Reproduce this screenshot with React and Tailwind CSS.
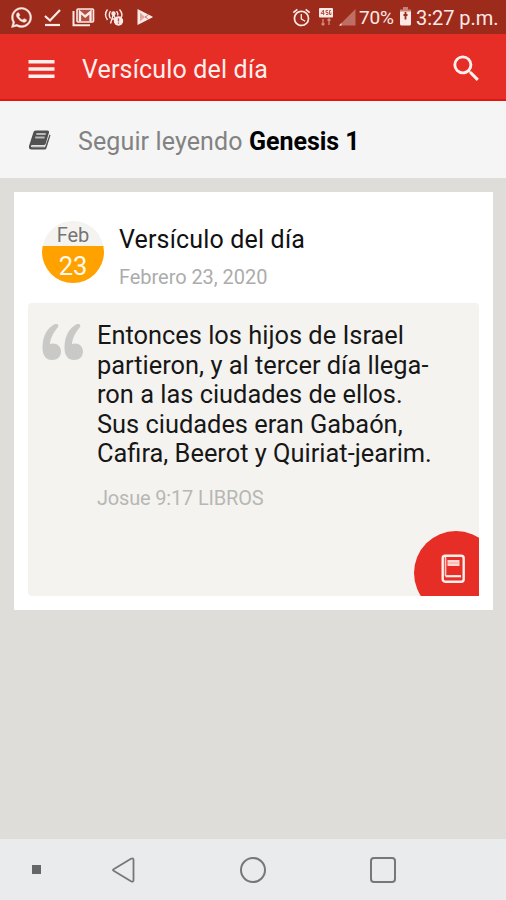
import React from "react";
import { FaWhatsapp } from "react-icons/fa";
import { MdAlarm, MdSearch } from "react-icons/md";

function StatusBar() {
  return (
    <div className="flex h-[34px] shrink-0 items-center bg-[#9d2b1b] text-[#fde9e6]">
      <FaWhatsapp className="ml-[10px] size-[23px] shrink-0" stroke="currentColor" strokeWidth="10" />
      <svg className="ml-[10px] h-[20px] w-[19px] shrink-0" viewBox="0 0 19 20" fill="none" stroke="currentColor">
        <path d="M2 9l5 4.500L17 3" strokeWidth="2.200" />
        <path d="M2 18h15" strokeWidth="2.200" />
      </svg>
      <svg className="ml-[10px] h-[20px] w-[23px] shrink-0" viewBox="0 0 23 20" fill="none" stroke="currentColor">
        <path d="M1.500 4v14.200H18" strokeWidth="2" />
        <rect x="5" y="2" width="16.500" height="13" rx="1" strokeWidth="1.600" fill="currentColor" fillOpacity=".2" />
        <path d="M8 14.500V5l5.200 4.500L18.500 5v9.500" strokeWidth="2.300" />
      </svg>
      <svg className="ml-[9px] h-[20px] w-[21px] shrink-0" viewBox="0 0 21 20" fill="none" stroke="currentColor" strokeWidth="1.400">
        <path d="M3.500 2.500Q-.5 7.500 3.500 13M6.500 4.200Q4 7.500 6.500 11.500M15.500 2.500Q19.500 7 17 10.500M12.500 4.200Q14.500 6.500 13.500 8.500" />
        <circle cx="9.500" cy="6.500" r="1.500" fill="currentColor" />
        <path d="M9.500 7L6.500 16.500M9.500 7l2 5M8 12h3" />
        <circle cx="14.500" cy="14" r="4.700" fill="currentColor" stroke="none" />
        <path d="M14.500 11.200v3.200M14.500 15.500v1.300" stroke="#b8584b" />
      </svg>
      <svg className="ml-[11px] h-[20px] w-[18px] shrink-0" viewBox="0 0 18 20">
        <path d="M1.500 2l14.800 7.600q1 .5 0 1L1.500 18z" fill="currentColor" />
        <path d="M9 9.500l4.500 4M9 10.500l4.500-4" stroke="#b8584b" strokeWidth=".8" />
        <path d="M4 5.500l5 4.500-5 4.500z" fill="#e3a59c" />
      </svg>
      <MdAlarm className="ml-auto size-[21px] shrink-0" />
      <svg className="ml-[6px] h-[20px] w-[16px] shrink-0" viewBox="0 0 16 20">
        <rect x="1" y="1" width="14" height="9.500" rx="1" fill="currentColor" />
        <path d="M5.500 3L3 6.500h3.500M5.500 3v5M8 7.500h2V5.500H8V3.500h2M13 3.500h-1.500v4H13v-2" fill="none" stroke="#b8584b" strokeWidth="1" />
        <path d="M5 12v6M3.500 16.500L5 18l1.500-1.500M11 18v-5.500M9.500 13.500L11 12l1.500 1.500" fill="none" stroke="#d68d81" strokeWidth="1.300" />
      </svg>
      <svg className="ml-[4px] h-[20px] w-[18px] shrink-0" viewBox="0 0 18 20">
        <path d="M17.500 2v16.500H1z" fill="#bf6e63" />
        <path d="M3.500 16v2.500H1z" fill="currentColor" />
      </svg>
      <span className="ml-[3px] mt-[2px] w-[37px] whitespace-nowrap text-[19px] tracking-[-0.200px]">70%</span>
      <svg className="ml-[3px] h-[20px] w-[13px] shrink-0" viewBox="0 0 13 20">
        <path d="M4 0h5v2.500h3V7H1V2.500h3z" fill="#c98177" />
        <path d="M1 4.500h11v12.500q0 1.500-1.500 1.500h-8Q1 18.500 1 17z" fill="currentColor" />
        <path d="M6.500 5v7.500M4.500 8h4" stroke="#9d2b1b" strokeWidth="1.800" />
      </svg>
      <span className="ml-[4px] mt-[2px] w-[90px] whitespace-nowrap text-[20px] tracking-[-0.050px]">3:27 p.m.</span>
    </div>
  );
}

function AppBar() {
  return (
    <header className="flex h-[67px] shrink-0 items-center border-b-2 border-[#df1710] bg-[#e62e26] pt-[2px] text-[#fff0ed]">
      <svg className="mt-[2px] ml-[28px] h-[20px] w-[27px] shrink-0" viewBox="0 0 27 20" fill="currentColor">
        <path d="M.5 1h26v3.500H.5zM.5 8.200h26v3.500H.5zM.5 15.400h26v3.500H.5z" />
      </svg>
      <h1 className="ml-[27px] mt-[4px] whitespace-nowrap text-[25px] tracking-[0.170px]">Versículo del día</h1>
      <MdSearch className="mr-[22px] mt-px ml-auto size-[35px]" />
    </header>
  );
}

function ContinueReading() {
  return (
    <div className="flex h-[77px] shrink-0 items-center bg-[#f5f5f5] pt-[4px]">
      <svg className="ml-[28px] mt-[-3px] h-[22px] w-[23px] shrink-0" viewBox="0 0 23 22">
        <path d="M7.500 1.500h12q2 0 1.500 2L17.800 14.500q-.5 1.500-2 1.500H4.500q-1.500 0-1.500 1.200 0 1 1.500 1H17L21.500 5.500l1 .7-4 12.800q-.4 1.500-2 1.500H3.500Q.5 20.500 1 17L5.500 3q.5-1.500 2-1.500z" fill="#515151" />
        <path d="M8.300 5h9.400M7.200 8.500h9.400" stroke="#b9b9b9" strokeWidth="1.800" />
        <path d="M4 17.300h12.500" stroke="#c4c4c4" strokeWidth="1.400" />
      </svg>
      <p className="ml-[27px] mt-[1px] whitespace-nowrap text-[25px] tracking-[0.120px] text-[#828282]">
        Seguir leyendo <b className="font-bold tracking-[-0.020px] text-black">Genesis 1</b>
      </p>
    </div>
  );
}

function VerseCard() {
  return (
    <section className="mx-[14px] mt-[14px] flex h-[418px] w-[479px] shrink-0 flex-col bg-white">
      <div className="flex h-[111px] shrink-0 pl-[28px]">
        <div className="mt-[29px] flex size-[62px] shrink-0 flex-col overflow-hidden rounded-full text-center">
          <div className="h-[25px] bg-[#f4f3f0] text-[20px] leading-[28px] text-[#747474]">Feb</div>
          <div className="flex-1 bg-[#ffa200] text-[25.500px] leading-[41px] text-[#fffaf0]">23</div>
        </div>
        <div className="ml-[15px] whitespace-nowrap">
          <h2 className="mt-[33px] text-[25px] leading-[30px] tracking-[0.170px] text-[#111]">Versículo del día</h2>
          <p className="mt-[10px] text-[20px] leading-[24px] tracking-[-0.050px] text-[#acacac]">Febrero 23, 2020</p>
        </div>
      </div>
      <div className="ml-[14px] flex h-[293px] w-[451px] flex-col overflow-hidden rounded-[4px] rounded-br-none bg-[#f4f3f0]">
        <div className="flex h-[228px] shrink-0">
          <svg className="mt-[20px] ml-[14px] h-[38px] w-[42px] shrink-0" viewBox="0 0 42 38" fill="#c9c9c7">
            <path d="M13 1C5 5 .5 13 .5 25c0 7.500 3.500 12 9.500 12 5.500 0 9-3.500 9-8.500s-3.500-8-8-8c-1 0-2 .2-3 .6C8.500 14 12 9 16.500 3.200L15.500 1z" />
            <path d="M35 1c-8 4-12.500 12-12.500 24 0 7.500 3.500 12 9.500 12 5.500 0 9-3.500 9-8.500s-3.500-8-8-8c-1 0-2 .2-3 .6C30.500 14 34 9 38.500 3.200L37.500 1z" />
          </svg>
          <div className="ml-[13px] whitespace-nowrap">
            <p className="mt-[18px] text-[25.400px] leading-[29.600px] text-[#171717]">
              Entonces los hijos de Israel<br />
              partieron, y al tercer día llega-<br />
              ron a las ciudades de ellos.<br />
              Sus ciudades eran Gabaón,<br />
              Cafira, Beerot y Quiriat-jearim.
            </p>
            <p className="mt-[17px] text-[20px] leading-[24px] tracking-[-0.180px] text-[#b7b7b5]">Josue 9:17 LIBROS</p>
          </div>
        </div>
        <button className="ml-[386px] flex size-[84px] shrink-0 rounded-full bg-[#e62e26]">
          <svg className="mt-[22px] ml-[27px] h-[31px] w-[25px] shrink-0" viewBox="0 0 25 31" fill="none" stroke="#fff0ed">
            <rect x="1.700" y="2.700" width="21" height="26" rx="2.500" strokeWidth="2.400" />
            <path d="M4.500 4v19" stroke="#fbd0cb" strokeWidth="1.600" />
            <path d="M4.500 23.200H20" strokeWidth="2.200" />
            <rect x="7" y="7.500" width="11" height="5" fill="#ffd6d0" stroke="#ffd6d0" strokeWidth="1" />
            <path d="M7.500 10h10" stroke="#f3a39c" strokeWidth="1" />
          </svg>
        </button>
      </div>
    </section>
  );
}

function NavigationBar() {
  return (
    <nav className="mt-auto flex h-[61px] shrink-0 items-center bg-[#e9ebed]">
      <div className="ml-[32px] size-[9px] bg-[#666]" />
      <svg className="ml-[70px] h-[28px] w-[26px]" viewBox="0 0 26 28" fill="none" stroke="#777" strokeWidth="1.800" strokeLinejoin="round">
        <path d="M3 13q-2 1 0 2l17 10.200q2.500 1.300 2.500-1.200V4q0-2.500-2.500-1.200z" />
      </svg>
      <div className="ml-[103px] size-[26px] rounded-full border-2 border-[#777]" />
      <div className="ml-[104px] size-[26px] rounded-[4px] border-2 border-[#777]" />
    </nav>
  );
}

export default function App() {
  return (
    <main className="flex h-[900px] w-[506px] flex-col overflow-hidden bg-[#deddda] font-['Roboto',sans-serif]">
      <StatusBar />
      <AppBar />
      <ContinueReading />
      <VerseCard />
      <NavigationBar />
    </main>
  );
}
